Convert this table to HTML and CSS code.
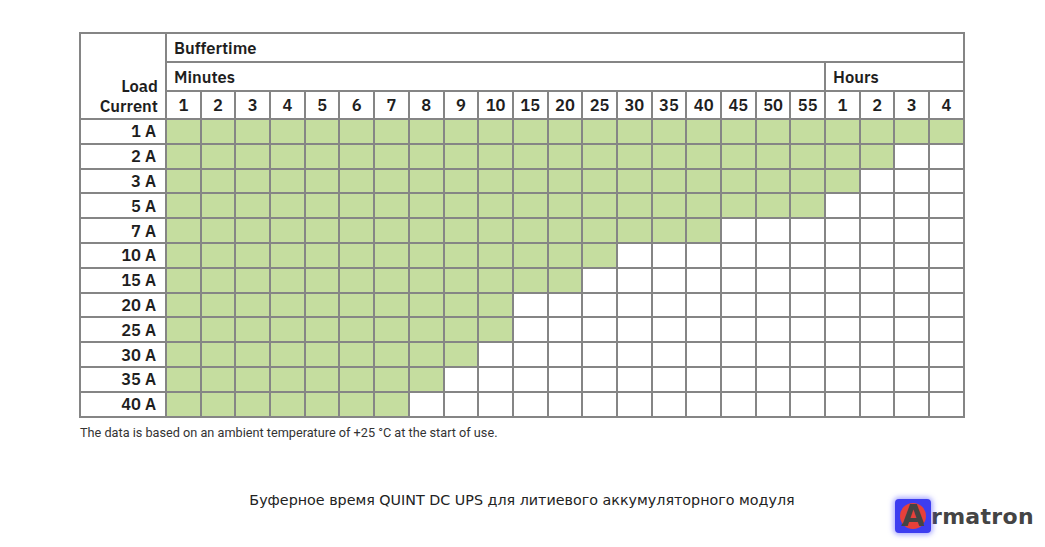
FILE: index.html
```html
<!DOCTYPE html>
<html>
<head>
<meta charset="utf-8">
<link rel="stylesheet" href="styles.css">
</head>
<body>
<div class="page">
  <table class="grid">
    <colgroup>
      <col class="c-load">
      <col span="23">
    </colgroup>
    <tr class="h1">
      <th class="load" rowspan="3"><span class="ln">Load</span><span class="ln">Current</span></th>
      <th class="grp" colspan="23">Buffertime</th>
    </tr>
    <tr class="h2">
      <th class="grp" colspan="19">Minutes</th>
      <th class="grp" colspan="4">Hours</th>
    </tr>
    <tr class="h3">
      <th>1</th><th>2</th><th>3</th><th>4</th><th>5</th><th>6</th><th>7</th><th>8</th><th>9</th><th>10</th><th>15</th><th>20</th><th>25</th><th>30</th><th>35</th><th>40</th><th>45</th><th>50</th><th>55</th><th>1</th><th>2</th><th>3</th><th>4</th>
    </tr>
    <tr><th class="lbl">1 A</th><td class="g"></td><td class="g"></td><td class="g"></td><td class="g"></td><td class="g"></td><td class="g"></td><td class="g"></td><td class="g"></td><td class="g"></td><td class="g"></td><td class="g"></td><td class="g"></td><td class="g"></td><td class="g"></td><td class="g"></td><td class="g"></td><td class="g"></td><td class="g"></td><td class="g"></td><td class="g"></td><td class="g"></td><td class="g"></td><td class="g"></td></tr>
    <tr><th class="lbl">2 A</th><td class="g"></td><td class="g"></td><td class="g"></td><td class="g"></td><td class="g"></td><td class="g"></td><td class="g"></td><td class="g"></td><td class="g"></td><td class="g"></td><td class="g"></td><td class="g"></td><td class="g"></td><td class="g"></td><td class="g"></td><td class="g"></td><td class="g"></td><td class="g"></td><td class="g"></td><td class="g"></td><td class="g"></td><td></td><td></td></tr>
    <tr><th class="lbl">3 A</th><td class="g"></td><td class="g"></td><td class="g"></td><td class="g"></td><td class="g"></td><td class="g"></td><td class="g"></td><td class="g"></td><td class="g"></td><td class="g"></td><td class="g"></td><td class="g"></td><td class="g"></td><td class="g"></td><td class="g"></td><td class="g"></td><td class="g"></td><td class="g"></td><td class="g"></td><td class="g"></td><td></td><td></td><td></td></tr>
    <tr><th class="lbl">5 A</th><td class="g"></td><td class="g"></td><td class="g"></td><td class="g"></td><td class="g"></td><td class="g"></td><td class="g"></td><td class="g"></td><td class="g"></td><td class="g"></td><td class="g"></td><td class="g"></td><td class="g"></td><td class="g"></td><td class="g"></td><td class="g"></td><td class="g"></td><td class="g"></td><td class="g"></td><td></td><td></td><td></td><td></td></tr>
    <tr><th class="lbl">7 A</th><td class="g"></td><td class="g"></td><td class="g"></td><td class="g"></td><td class="g"></td><td class="g"></td><td class="g"></td><td class="g"></td><td class="g"></td><td class="g"></td><td class="g"></td><td class="g"></td><td class="g"></td><td class="g"></td><td class="g"></td><td class="g"></td><td></td><td></td><td></td><td></td><td></td><td></td><td></td></tr>
    <tr><th class="lbl">10 A</th><td class="g"></td><td class="g"></td><td class="g"></td><td class="g"></td><td class="g"></td><td class="g"></td><td class="g"></td><td class="g"></td><td class="g"></td><td class="g"></td><td class="g"></td><td class="g"></td><td class="g"></td><td></td><td></td><td></td><td></td><td></td><td></td><td></td><td></td><td></td><td></td></tr>
    <tr><th class="lbl">15 A</th><td class="g"></td><td class="g"></td><td class="g"></td><td class="g"></td><td class="g"></td><td class="g"></td><td class="g"></td><td class="g"></td><td class="g"></td><td class="g"></td><td class="g"></td><td class="g"></td><td></td><td></td><td></td><td></td><td></td><td></td><td></td><td></td><td></td><td></td><td></td></tr>
    <tr><th class="lbl">20 A</th><td class="g"></td><td class="g"></td><td class="g"></td><td class="g"></td><td class="g"></td><td class="g"></td><td class="g"></td><td class="g"></td><td class="g"></td><td class="g"></td><td></td><td></td><td></td><td></td><td></td><td></td><td></td><td></td><td></td><td></td><td></td><td></td><td></td></tr>
    <tr><th class="lbl">25 A</th><td class="g"></td><td class="g"></td><td class="g"></td><td class="g"></td><td class="g"></td><td class="g"></td><td class="g"></td><td class="g"></td><td class="g"></td><td class="g"></td><td></td><td></td><td></td><td></td><td></td><td></td><td></td><td></td><td></td><td></td><td></td><td></td><td></td></tr>
    <tr><th class="lbl">30 A</th><td class="g"></td><td class="g"></td><td class="g"></td><td class="g"></td><td class="g"></td><td class="g"></td><td class="g"></td><td class="g"></td><td class="g"></td><td></td><td></td><td></td><td></td><td></td><td></td><td></td><td></td><td></td><td></td><td></td><td></td><td></td><td></td></tr>
    <tr><th class="lbl">35 A</th><td class="g"></td><td class="g"></td><td class="g"></td><td class="g"></td><td class="g"></td><td class="g"></td><td class="g"></td><td class="g"></td><td></td><td></td><td></td><td></td><td></td><td></td><td></td><td></td><td></td><td></td><td></td><td></td><td></td><td></td><td></td></tr>
    <tr><th class="lbl">40 A</th><td class="g"></td><td class="g"></td><td class="g"></td><td class="g"></td><td class="g"></td><td class="g"></td><td class="g"></td><td></td><td></td><td></td><td></td><td></td><td></td><td></td><td></td><td></td><td></td><td></td><td></td><td></td><td></td><td></td><td></td></tr>
  </table>
  <p class="note">The data is based on an ambient temperature of +25 °C at the start of use.</p>
  <p class="caption">Буферное время QUINT DC UPS для литиевого аккумуляторного модуля</p>
  <div class="logo">
    <span class="logo-mark">
      <svg width="36" height="34" viewBox="0 0 36 34">
        <circle cx="18" cy="17" r="13" fill="#e8403a"/>
      </svg>
      <span class="logo-a">A</span>
    </span>
    <span class="logo-text">rmatron</span>
  </div>
</div>
</body>
</html>
```

FILE: styles.css
```css
html, body {
  margin: 0;
  padding: 0;
  background: #ffffff;
}

.page {
  position: relative;
  width: 1045px;
  height: 547px;
  padding: 32px 0 0 79px;
  box-sizing: border-box;
  font-family: "IBM Plex Sans", "Inter", "Liberation Sans", sans-serif;
}

.grid {
  border-collapse: collapse;
  table-layout: fixed;
  width: 886px;
  border: 2px solid #858585;
}

.grid col.c-load {
  width: 86px;
}

.grid th,
.grid td {
  border: 2px solid #858585;
  padding: 0;
  font-size: 16.5px;
  font-weight: 600;
  color: #1e1e1e;
  text-align: center;
  line-height: 20px;
}

.grid .h1 th,
.grid .h2 th {
  height: 27px;
}

.grid .h3 th {
  height: 26px;
}

.grid th.grp {
  text-align: left;
  padding-left: 7px;
}

.grid th.load {
  text-align: right;
  vertical-align: bottom;
  padding: 0 7px 2px 0;
}

.grid th.load .ln {
  display: block;
  line-height: 20px;
  height: 20px;
}

.grid th.lbl {
  text-align: right;
  padding-right: 9px;
  height: 22.8px;
}

.grid td.g {
  background: #c5dd9f;
}

.note {
  margin: 7px 0 0 1px;
  font-family: "Roboto", "Liberation Sans", sans-serif;
  font-size: 12.7px;
  color: #333333;
}

.caption {
  width: 886px;
  margin: 52px 0 0 0;
  text-align: center;
  font-family: "DejaVu Sans", sans-serif;
  font-size: 14.3px;
  color: #222222;
}

.logo {
  position: absolute;
  left: 895px;
  top: 499px;
  display: flex;
  align-items: center;
}

.logo-mark {
  position: relative;
  width: 36px;
  height: 34px;
  background: #3d3df0;
  border-radius: 4px;
  box-shadow: 0 0 5px 2px rgba(90, 90, 255, 0.5);
}

.logo-mark svg {
  display: block;
}

.logo-a {
  position: absolute;
  left: 0;
  top: 0;
  width: 36px;
  text-align: center;
  font-family: "DejaVu Sans", sans-serif;
  font-weight: bold;
  font-size: 30px;
  line-height: 34px;
  color: #444444;
}

.logo-text {
  font-family: "DejaVu Sans", sans-serif;
  font-weight: bold;
  font-size: 22px;
  color: #444444;
  margin-left: 0;
  letter-spacing: 0.3px;
}
```
